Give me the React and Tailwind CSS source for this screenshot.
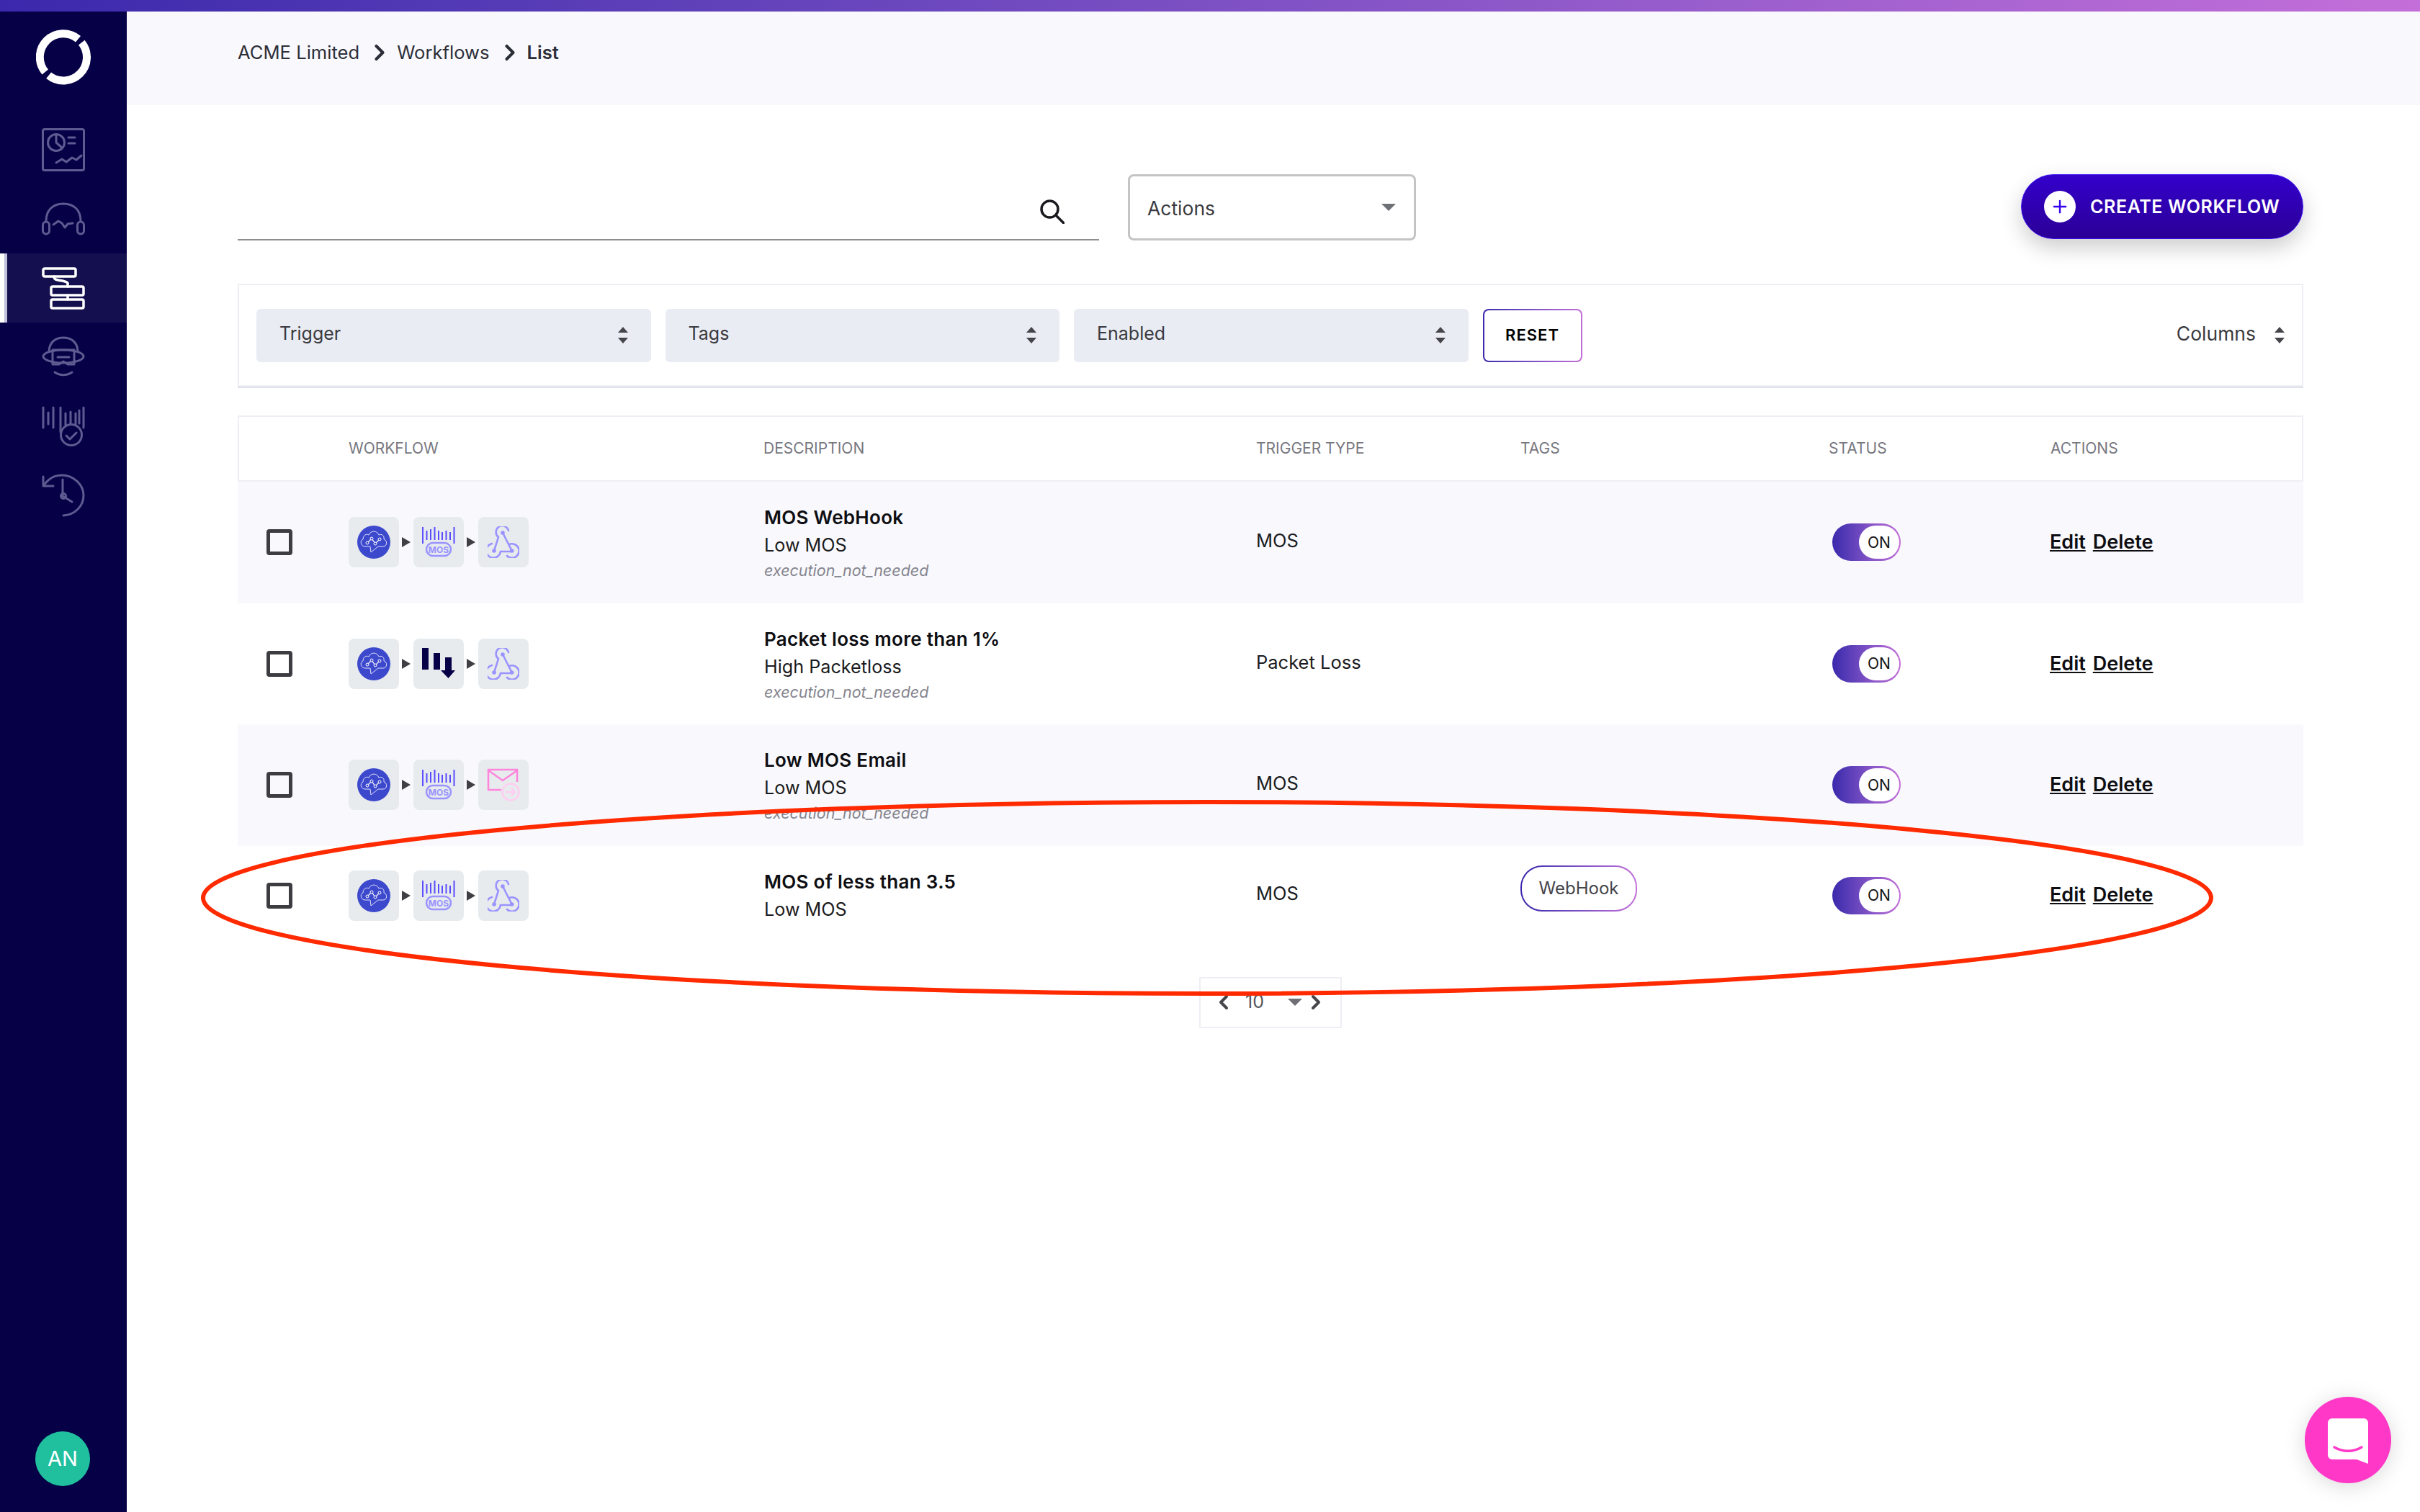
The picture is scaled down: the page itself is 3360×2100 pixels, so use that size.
import React from "react";
import { ChevronRight, ChevronLeft, Plus } from "lucide-react";

const rows = [
  { title: "MOS WebHook", sub: "Low MOS", note: "execution_not_needed", trigger: "MOS", metric: "mos", action: "hook", tint: true },
  { title: "Packet loss more than 1%", sub: "High Packetloss", note: "execution_not_needed", trigger: "Packet Loss", metric: "loss", action: "hook" },
  { title: "Low MOS Email", sub: "Low MOS", note: "execution_not_needed", trigger: "MOS", metric: "mos", action: "mail", tint: true },
  { title: "MOS of less than 3.5", sub: "Low MOS", trigger: "MOS", metric: "mos", action: "hook", tag: "WebHook", short: true },
];

const cols = "grid grid-cols-[154px_576px_684px_367px_428px_308px_351px] items-center";
const headCols = "grid grid-cols-[152px_576px_684px_367px_428px_308px_349px] items-center";

function Logo() {
  return (
    <svg width="76" height="77" viewBox="0 0 76 77" fill="none" stroke="#fff" strokeWidth="11">
      <path d="M58.500 13.200A32.500 32.500 0 0 0 12.700 58.900" />
      <path d="M63.300 18.100A32.500 32.500 0 0 1 17.600 63.800" />
    </svg>
  );
}

function NavIcon({ name, color = "#5e5b91" }) {
  const props = { width: 60, fill: "none", stroke: color, strokeWidth: 3, strokeLinecap: "round", strokeLinejoin: "round" };
  if (name === "dashboard")
    return (
      <svg {...props} height="60" viewBox="0 0 60 60">
        <rect x="1.5" y="1.5" width="57" height="57" rx="2.5" />
        <circle cx="20" cy="20" r="11.5" />
        <path d="M20 9v11l8 7M37 13h9M37 21h9M20 48l8-5 6 4 8-6 6 3 7-6" />
      </svg>
    );
  if (name === "headset")
    return (
      <svg {...props} height="46" viewBox="0 0 60 46">
        <path d="M6 26C6 10 16 2 30 2s24 8 24 24" />
        <rect x="1.5" y="27" width="9" height="17" rx="4.5" />
        <rect x="49.5" y="27" width="9" height="17" rx="4.5" />
        <path d="M16 31l7-5 5 3 4 6 4-5 7-1" />
      </svg>
    );
  if (name === "workflow")
    return (
      <svg {...props} height="59" viewBox="0 0 60 59" strokeWidth="3.5">
        <rect x="2" y="2" width="45" height="11" rx="2" />
        <rect x="13" y="27" width="45" height="12" rx="2" />
        <rect x="13" y="45" width="45" height="12" rx="2" />
        <path d="M17 13c0 8 12 3 19 9v5M36 39v6" />
      </svg>
    );
  if (name === "helmet")
    return (
      <svg {...props} height="56" viewBox="0 0 60 56">
        <path d="M10 20C11 8 19 2 30 2s19 6 20 18" />
        <ellipse cx="30" cy="28" rx="28" ry="9" />
        <path d="M15 19h30v20H36l-6-4-6 4h-9zM22 29h16M18 50c7 5 17 5 24 0" />
      </svg>
    );
  if (name === "barcode")
    return (
      <svg {...props} height="56" viewBox="0 0 60 56">
        <path d="M2 2v28M9 9v16M16 2v28M26 2v34M33 10v16M40 8v18M47 10v16M52 6v18M58 2v28" />
        <circle cx="41" cy="40" r="14.5" fill="#060047" />
        <path d="M34 41l5 5 9-9" />
      </svg>
    );
  return (
    <svg {...props} height="61" viewBox="0 0 60 61">
      <path d="M3 17c6-9 15-14 25-14 16 0 30 13 30 28S46 58 30 59" />
      <path d="M2 5v13h14" />
      <path d="M29 9v23l13 8" />
      <circle cx="30" cy="32" r="3.5" />
    </svg>
  );
}

function CloudIcon() {
  return (
    <svg width="46" height="46" viewBox="0 0 46 46" className="rounded-full bg-[#3d49cd]">
      <path d="M11 29C5 29 3 21 8 19 8 13 13 11 16 13 19 6 28 7 30 13 34 11 38 14 37 19 42 20 42 29 36 29H29L19 37 18 29Z" fill="none" stroke="#dfe2fb" strokeWidth="1" />
      <path d="M14 24l6-6 5 7 6-6" fill="none" stroke="#fff" strokeWidth="1.2" />
      <circle cx="14" cy="24" r="2" fill="#3d49cd" stroke="#fff" />
      <circle cx="20" cy="18" r="2" fill="#3d49cd" stroke="#fff" />
      <circle cx="25" cy="25" r="2" fill="#3d49cd" stroke="#fff" />
      <circle cx="31" cy="19" r="2" fill="#3d49cd" stroke="#fff" />
    </svg>
  );
}

function MosIcon() {
  return (
    <svg width="46" height="42" viewBox="0 0 46 42" fill="none">
      <path d="M1 0v23M6.500 5v13M12 3v15M17.500 0v18M23 5v13M28 7v11M33.500 5v13M39 7v11M44.500 0v23" stroke="#5a4dff" strokeWidth="2" />
      <rect x="6" y="22" width="34" height="18" rx="9" stroke="#9a93ff" strokeWidth="2.5" />
      <text x="23" y="35.5" textAnchor="middle" fontSize="12" fontWeight="700" fill="#9a93ff" fontFamily="Inter, sans-serif">MOS</text>
    </svg>
  );
}

function LossIcon() {
  return (
    <svg width="46" height="44" viewBox="0 0 46 44" fill="#060047">
      <rect x="0" y="0" width="9" height="30" />
      <rect x="16" y="7" width="9" height="23" />
      <path d="M32 13h9v18h5L36.500 42 26 31h6z" />
    </svg>
  );
}

function HookIcon() {
  return (
    <svg width="44" height="44" viewBox="0 0 44 44" fill="none" stroke="#9a93ff" strokeWidth="2.6" strokeLinecap="round">
      <path d="M9 34L15 15A8.800 8.800 0 1 1 29 6" />
      <path d="M21 9L33.700 34" />
      <path d="M6 24A10 10 0 1 0 18 35H33.700" />
      <path d="M30 25A9.800 9.800 0 1 1 27 41" />
      <circle cx="21" cy="9" r="1.500" fill="#9a93ff" />
      <circle cx="9" cy="34" r="1.500" fill="#9a93ff" />
      <circle cx="33.700" cy="34" r="1.500" fill="#9a93ff" />
    </svg>
  );
}

function MailIcon() {
  return (
    <svg width="46" height="46" viewBox="0 0 46 46" fill="none">
      <path d="M20 30H2V2h40v17M2 3l20 14L42 3" stroke="#ff85dc" strokeWidth="2.500" />
      <circle cx="33" cy="33" r="11.500" stroke="#ffcdf1" strokeWidth="2.500" />
      <path d="M26 33h13M34 28l5 5-5 5" stroke="#ffcdf1" strokeWidth="2.500" />
    </svg>
  );
}

function Tile({ children }) {
  return <div className="w-[70px] h-[70px] rounded-[8px] bg-[#e7ebee] flex items-center justify-center">{children}</div>;
}

function Arrow() {
  return <div className="w-0 h-0 border-y-[7px] border-y-transparent border-l-[12px] border-l-[#3f3f44]" />;
}

function UpDown() {
  return (
    <span className="flex flex-col gap-[7px]">
      <span className="w-0 h-0 border-x-[7px] border-x-transparent border-b-[8px] border-b-[#45454a]" />
      <span className="w-0 h-0 border-x-[7px] border-x-transparent border-t-[8px] border-t-[#45454a]" />
    </span>
  );
}

function FilterSelect({ label }) {
  return (
    <div className="w-[547.500px] h-[74px] rounded-[6px] bg-[#e9ecf3] pl-[32px] pr-[32px] flex items-center justify-between text-[25px] text-[#3a3a40]">
      <span className="pb-[3px]">{label}</span>
      <UpDown />
    </div>
  );
}

function Row({ row }) {
  return (
    <div className={`${cols} ${row.short ? "h-[138px]" : "h-[168.500px]"} ${row.tint ? "bg-[#f9f9fd]" : "bg-white"}`}>
      <div className="pl-[40px]">
        <div className="w-[36px] h-[36px] border-[5px] border-[#3c3c41] rounded-[4px]" />
      </div>
      <div className="flex items-center gap-[4px]">
        <Tile><CloudIcon /></Tile>
        <Arrow />
        <Tile>{row.metric === "mos" ? <MosIcon /> : <LossIcon />}</Tile>
        <Arrow />
        <Tile>{row.action === "hook" ? <HookIcon /> : <MailIcon />}</Tile>
      </div>
      <div className={`flex flex-col pl-[1px] ${row.note ? "pt-[3px]" : ""}`}>
        <div className="text-[26px] leading-[38px] font-semibold tracking-[0.3px] text-[#0e0e12]">{row.title}</div>
        <div className="text-[25.200px] leading-[38px] text-[#1b1b20]">{row.sub}</div>
        {row.note && <div className="text-[21.500px] leading-[33px] italic text-[#85858f]">{row.note}</div>}
      </div>
      <div className="text-[25.500px] text-[#1b1b20] pb-[4px]">{row.trigger}</div>
      <div>
        {row.tag && (
          <div className="w-[162px] h-[64px] p-[2px] rounded-[30px] bg-linear-to-r from-[#3b28ac] to-[#c46fd9] mb-[20px]">
            <div className="w-full h-full rounded-[28px] bg-white flex items-center justify-center text-[24px] text-[#45454a]">{row.tag}</div>
          </div>
        )}
      </div>
      <div>
        <div className="w-[95px] h-[52px] ml-[5px] rounded-[26px] bg-linear-to-r from-[#3b28ac] to-[#c46fd9] flex items-center justify-end pr-[2px]">
          <div className="w-[56px] h-[46px] rounded-[23px] bg-white flex items-center justify-center text-[21px] text-[#111]">ON</div>
        </div>
      </div>
      <div className="flex gap-[10px] text-[27px] font-semibold text-[#0e0e12] underline -ml-[1px]">
        <span>Edit</span>
        <span>Delete</span>
      </div>
    </div>
  );
}

export default function App() {
  return (
    <div className="relative w-[3360px] h-[2100px] overflow-hidden bg-white flex flex-col font-['Inter',sans-serif]">
      <div className="h-[16px] shrink-0 bg-linear-to-r from-[#3b28ac] to-[#c46fd9]" />
      <div className="flex flex-1 min-h-0">
        <aside className="w-[176px] shrink-0 bg-[#060047] flex flex-col items-center">
          <div className="mt-[25px] mb-[60px]"><Logo /></div>
          <NavIcon name="dashboard" />
          <div className="mt-[43px] mb-[25px]"><NavIcon name="headset" /></div>
          <div className="w-full h-[96px] flex items-center justify-center bg-[#14104f] relative">
            <div className="absolute left-0 top-0 bottom-0 w-[6px] bg-white" />
            <div className="absolute left-[6px] top-0 bottom-0 w-[4px] bg-[#c0c0d9]" />
            <NavIcon name="workflow" color="#ffffff" />
          </div>
          <div className="mt-[19px]"><NavIcon name="helmet" /></div>
          <div className="mt-[41px]"><NavIcon name="barcode" /></div>
          <div className="mt-[37px]"><NavIcon name="history" /></div>
          <div className="mt-auto mb-[36px] mr-[2px] w-[76px] h-[76px] rounded-full bg-[#20c09f] flex items-center justify-center text-white text-[29px]">AN</div>
        </aside>

        <main className="flex-1 min-w-0">
          <header className="h-[130px] bg-[#f9f9fd] pl-[154px] pb-[16px] flex items-center text-[25.600px] text-[#2d2f38]">
            <span>ACME Limited</span>
            <ChevronRight size={36} strokeWidth={2.8} className="ml-[10px] mr-[6px]" />
            <span>Workflows</span>
            <ChevronRight size={36} strokeWidth={2.8} className="ml-[10px] mr-[6px]" />
            <span className="font-semibold">List</span>
          </header>

          <div className="pl-[154px] pr-[162px] pt-[96px]">
            <div className="flex items-start h-[92px]">
              <div className="w-[1196px] h-[92px] border-b-2 border-[#8e8e8e] flex items-center justify-end pr-[48px] pt-[14px]">
                <svg width="34" height="34" viewBox="0 0 34 34" fill="none" stroke="#1a1a1e" strokeWidth="3.5">
                  <circle cx="13.500" cy="13.500" r="11.500" />
                  <path d="M22 22l10.500 10.500" strokeLinecap="round" />
                </svg>
              </div>
              <div className="ml-[40px] w-[400px] h-[92px] rounded-[8px] border-[3px] border-[#c4c4c4] pl-[24px] pr-[25px] flex items-center justify-between text-[26.500px] text-[#3a3a40]">
                <span className="pt-[4px]">Actions</span>
                <span className="w-0 h-0 border-x-[10px] border-x-transparent border-t-[10px] border-t-[#6f6f76]" />
              </div>
              <button className="ml-auto w-[392px] h-[90px] rounded-[45px] bg-linear-to-b from-[#3300cc] to-[#2b0096] border border-[#3a10f0] shadow-[0_12px_30px_rgba(0,0,0,0.2)] flex items-center pl-[31px] gap-[20px] text-white text-[25px] font-semibold tracking-[0.6px]">
                <span className="w-[44px] h-[44px] rounded-full bg-white flex items-center justify-center text-[#3300ee]">
                  <Plus size={28} strokeWidth={2} />
                </span>
                <span className="pt-[1px]">CREATE WORKFLOW</span>
              </button>
            </div>

            <div className="mt-[60px] h-[143px] border-2 border-[#edeff4] shadow-[0_2px_0_#dfe0e8] pl-[24px] pr-[24px] flex items-center gap-[20px]">
              <FilterSelect label="Trigger" />
              <FilterSelect label="Tags" />
              <FilterSelect label="Enabled" />
              <div className="w-[138px] h-[74px] p-[2px] rounded-[8px] bg-linear-to-r from-[#3b28ac] to-[#c46fd9]">
                <div className="w-full h-full rounded-[6px] bg-white flex items-center justify-center text-[22px] font-semibold tracking-[1px] text-black">RESET</div>
              </div>
              <div className="ml-auto flex items-center gap-[26px] text-[26.500px] text-[#3a3a40]">
                <span className="pb-[3px]">Columns</span>
                <UpDown />
              </div>
            </div>

            <div className="mt-[40px]">
              <div className={`${headCols} h-[92px] border-2 border-[#edeff4] text-[21px] text-[#77777f]`}>
                <div />
                <div>WORKFLOW</div>
                <div>DESCRIPTION</div>
                <div>TRIGGER TYPE</div>
                <div>TAGS</div>
                <div>STATUS</div>
                <div>ACTIONS</div>
              </div>
              {rows.map((row) => <Row key={row.title} row={row} />)}
            </div>

            <div className="mt-[44px] ml-[1335px] w-[198px] h-[71px] border-2 border-[#edeff4] flex items-center pl-[16px] pr-[18px] text-[25px] text-[#55555c]">
              <ChevronLeft size={32} strokeWidth={3} className="text-[#45454a]" />
              <span className="ml-[14px]">10</span>
              <span className="ml-auto mr-[3px] w-0 h-0 border-x-[10px] border-x-transparent border-t-[10px] border-t-[#6f6f76]" />
              <ChevronRight size={32} strokeWidth={3} className="text-[#45454a]" />
            </div>
          </div>
        </main>
      </div>

      {/* red annotation drawn over the last row */}
      <svg className="absolute left-0 top-0 pointer-events-none" width="3360" height="2100" fill="none">
        <ellipse cx="1676" cy="1247" rx="1394" ry="133" stroke="#ff2a00" strokeWidth="6" />
      </svg>

      <div className="absolute left-[3200px] top-[1940px] w-[120px] h-[120px] rounded-full bg-[#ff38c8] shadow-[0_4px_30px_rgba(0,0,0,0.15)] flex items-center justify-center">
        <svg width="56" height="64" viewBox="0 0 56 64" className="mt-[3px]">
          <path d="M6 0h44a6 6 0 0 1 6 6v57L40 57H6a6 6 0 0 1-6-6V6a6 6 0 0 1 6-6z" fill="#fff" />
          <path d="M9 40c12 7 26 7 38 0" fill="none" stroke="#ff38c8" strokeWidth="3.500" strokeLinecap="round" />
        </svg>
      </div>
    </div>
  );
}
